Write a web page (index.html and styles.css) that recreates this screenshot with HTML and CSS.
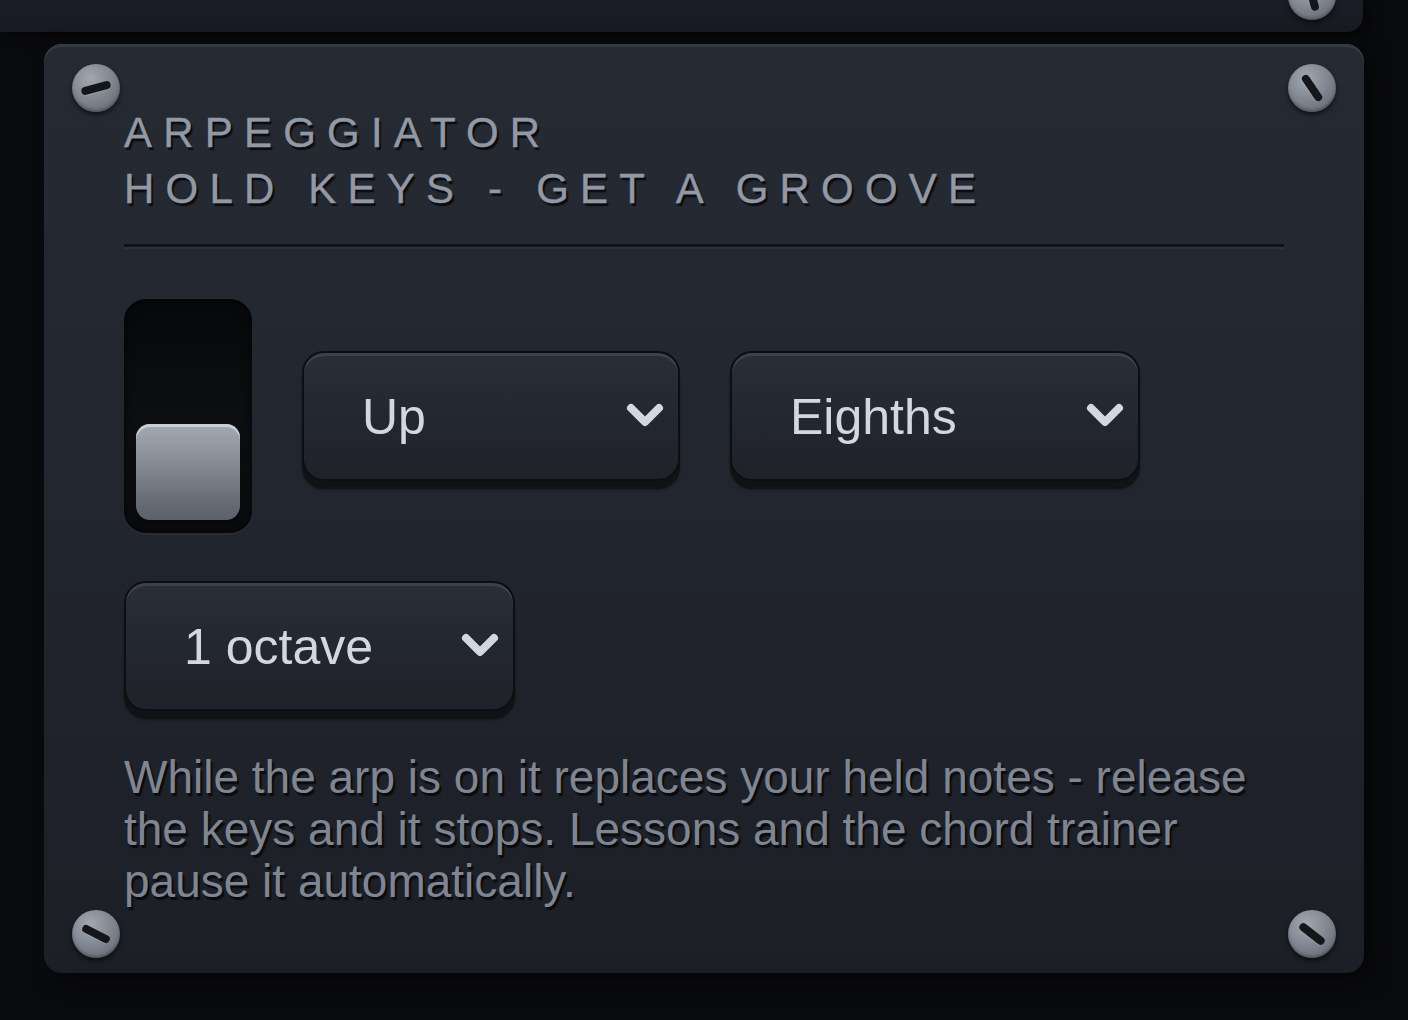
FILE: index.html
```html
<!DOCTYPE html>
<html lang="en">
<head>
<meta charset="utf-8">
<title>Arpeggiator</title>
<link rel="stylesheet" href="styles.css">
</head>
<body>
<div class="top-panel">
  <span class="screw screw-top"><span class="slot slot-a80"></span></span>
</div>
<section class="panel">
  <span class="screw tl"><span class="slot slot-m15"></span></span>
  <span class="screw tr"><span class="slot slot-58"></span></span>
  <span class="screw bl"><span class="slot slot-27"></span></span>
  <span class="screw br"><span class="slot slot-38"></span></span>

  <h2 class="title">ARPEGGIATOR<br>HOLD KEYS - GET A GROOVE</h2>
  <div class="divider"></div>

  <div class="controls">
    <div class="toggle"><div class="knob"></div></div>
    <div class="select w-mode">
      <span class="label">Up</span>
      <svg class="chev" viewBox="0 0 38 24" width="38" height="24"><polyline points="5,5 19,19 33,5" fill="none" stroke="#d3d7df" stroke-width="8" stroke-linecap="round" stroke-linejoin="round"/></svg>
    </div>
    <div class="select w-rate">
      <span class="label">Eighths</span>
      <svg class="chev" viewBox="0 0 38 24" width="38" height="24"><polyline points="5,5 19,19 33,5" fill="none" stroke="#d3d7df" stroke-width="8" stroke-linecap="round" stroke-linejoin="round"/></svg>
    </div>
  </div>

  <div class="row2">
    <div class="select w-oct">
      <span class="label">1 octave</span>
      <svg class="chev" viewBox="0 0 38 24" width="38" height="24"><polyline points="5,5 19,19 33,5" fill="none" stroke="#d3d7df" stroke-width="8" stroke-linecap="round" stroke-linejoin="round"/></svg>
    </div>
  </div>

  <p class="note">While the arp is on it replaces your held notes - release the keys and it stops. Lessons and the chord trainer pause it automatically.</p>
</section>
</body>
</html>
```

FILE: styles.css
```css
html, body {
  margin: 0;
  padding: 0;
}
body {
  background: #0a0b0e;
  width: 1408px;
  height: 1020px;
  overflow: hidden;
  font-family: "Liberation Sans", Arial, Helvetica, sans-serif;
}

.top-panel {
  position: relative;
  width: 1363px;
  height: 32px;
  background: linear-gradient(#1b1e26, #171a21);
  border-radius: 0 0 16px 0;
  box-shadow: 6px 4px 14px rgba(0, 0, 0, 0.55);
}

.panel {
  position: relative;
  box-sizing: border-box;
  width: 1320px;
  margin: 12px 0 0 44px;
  padding: 61px 80px 66px 80px;
  border-radius: 18px;
  background: linear-gradient(#262a33 0%, #22262e 45%, #1c1f26 100%);
  box-shadow: inset 0 3px 0 #343944, 8px 8px 22px rgba(0, 0, 0, 0.6);
}

/* screws */
.screw {
  position: absolute;
  width: 48px;
  height: 48px;
  border-radius: 50%;
  background: radial-gradient(circle at 38% 30%, #a2a8b2 0%, #838992 45%, #5c616a 100%);
  box-shadow: 0 3px 5px rgba(0, 0, 0, 0.55), inset 0 -2px 3px rgba(0, 0, 0, 0.25);
  display: flex;
  align-items: center;
  justify-content: center;
}
.screw.tl { left: 28px; top: 20px; }
.screw.tr { right: 28px; top: 20px; }
.screw.bl { left: 28px; bottom: 15px; }
.screw.br { right: 28px; bottom: 15px; }
.screw.screw-top { right: 27px; top: -28px; }

.slot {
  display: block;
  width: 30px;
  height: 8px;
  border-radius: 4px;
  background: #14161a;
  box-shadow: 0 1px 0 rgba(255, 255, 255, 0.12);
}
.slot-m15 { transform: rotate(-15deg); }
.slot-58 { transform: rotate(56deg); }
.slot-27 { transform: rotate(27deg); }
.slot-38 { transform: rotate(38deg); }
.slot-a80 { transform: rotate(75deg); }

/* title */
.title {
  margin: 0;
  font-size: 42px;
  font-weight: normal;
  line-height: 56px;
  letter-spacing: 11.2px;
  color: #9299a6;
  text-shadow: 2px 3px 1px #0b0c0f;
  -webkit-text-stroke: 0.4px #9299a6;
  white-space: nowrap;
}

.divider {
  margin-top: 27px;
  height: 3px;
  background: #111318;
  box-shadow: 0 2px 0 #2e323c;
}

/* controls */
.controls {
  margin-top: 52px;
  display: flex;
  align-items: center;
  gap: 50px;
}

.toggle {
  position: relative;
  box-sizing: border-box;
  width: 128px;
  height: 234px;
  border-radius: 22px;
  background: linear-gradient(#07080a 0%, #0d0f12 60%, #0b0c0f 100%);
  box-shadow: 0 2px 0 #2a2e37, inset 0 0 8px rgba(0, 0, 0, 0.8);
  display: flex;
  align-items: flex-end;
  justify-content: center;
  padding-bottom: 13px;
}
.knob {
  width: 104px;
  height: 96px;
  border-radius: 14px;
  background: linear-gradient(#a4aab4 0%, #8a909a 35%, #6a7078 75%, #5c6169 100%);
  box-shadow: inset 0 3px 0 #c9ced6, 0 3px 5px rgba(0, 0, 0, 0.5);
}

.select {
  box-sizing: border-box;
  height: 130px;
  border: 2px solid #0c0e11;
  border-radius: 22px;
  background: linear-gradient(#2a2e37 0%, #23272f 50%, #1f2229 100%);
  box-shadow: inset 0 3px 0 #3c414b, 0 8px 0 #101216, 0 9px 3px rgba(0, 0, 0, 0.35);
  display: flex;
  align-items: center;
  justify-content: space-between;
  padding: 0 14px 0 58px;
}
.select .label {
  font-size: 50px;
  color: #d3d7df;
  line-height: 1;
  margin-top: 2px;
}
.select .chev {
  flex: none;
  margin-top: -2px;
}
.w-mode { width: 378px; }
.w-rate { width: 410px; }
.w-oct { width: 391px; }

.row2 {
  margin-top: 48px;
  display: flex;
}

.note {
  margin: 40px 0 0 0;
  font-size: 46px;
  line-height: 52px;
  color: #7f8592;
  text-shadow: 2px 3px 1px #0a0b0d;
}
```
